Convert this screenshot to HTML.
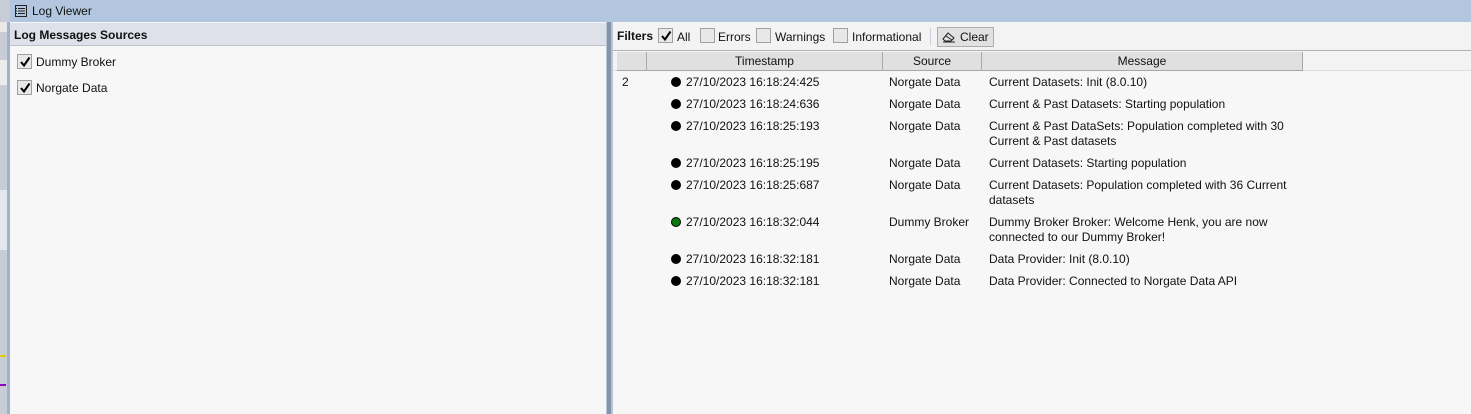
<!DOCTYPE html>
<html><head><meta charset="utf-8"><style>
*{margin:0;padding:0;box-sizing:border-box}
body{width:1471px;height:414px;overflow:hidden;background:#f7f7f7;font-family:"Liberation Sans",sans-serif;font-size:12px;color:#111;position:relative}
.a{position:absolute;white-space:nowrap}
.cb{position:absolute;width:15px;height:15px;border:1px solid #a0a0a0;background:#e8e8e8}
.cb svg{position:absolute;left:1px;top:1px}
.dot{position:absolute;width:10px;height:10px;border-radius:50%;background:#000}
.hd{position:absolute;top:52px;height:19px;border-right:1px solid #a8a8a8;border-bottom:1px solid #a8a8a8;background:#e0e0e0;text-align:center;line-height:18px}
</style></head><body>
<div class="a" style="left:0;top:0;width:10px;height:414px;background:#c8ccd4"></div>
<div class="a" style="left:0;top:22px;width:9px;height:10px;background:#e8e8e8"></div>
<div class="a" style="left:0;top:60px;width:9px;height:25px;background:#ececec"></div>
<div class="a" style="left:0;top:190px;width:9px;height:60px;background:#e4e8ee"></div>
<div class="a" style="left:0;top:355px;width:6px;height:2px;background:#e0d000"></div>
<div class="a" style="left:0;top:384px;width:6px;height:2px;background:#9000c0"></div>
<div class="a" style="left:7px;top:22px;width:3px;height:392px;background:#9fb2cc"></div>
<div class="a" style="left:10px;top:0;width:1461px;height:22px;background:#b3c6df"></div>
<svg class="a" style="left:15px;top:5px" width="12" height="12"><rect x="0.5" y="0.5" width="11" height="11" fill="none" stroke="#222"/><line x1="3" y1="3.5" x2="10" y2="3.5" stroke="#222"/><line x1="3" y1="6" x2="10" y2="6" stroke="#222"/><line x1="3" y1="8.5" x2="10" y2="8.5" stroke="#222"/><line x1="1" y1="3.5" x2="2" y2="3.5" stroke="#222"/><line x1="1" y1="6" x2="2" y2="6" stroke="#222"/><line x1="1" y1="8.5" x2="2" y2="8.5" stroke="#222"/></svg>
<div class="a" style="left:32px;top:4px;font-size:12px">Log Viewer</div>
<div class="a" style="left:10px;top:22px;width:596px;height:392px;background:#f7f7f7"></div>
<div class="a" style="left:10px;top:23px;width:596px;height:23px;background:#dfe1ea;border-bottom:1px solid #c0c0c8"></div>
<div class="a" style="left:14px;top:28px;font-weight:bold">Log Messages Sources</div>
<div class="cb" style="left:17px;top:54px"><svg width="12" height="12"><path d="M2 6 L5 9.5 L10.5 1.5" stroke="#000" stroke-width="2" fill="none"/></svg></div>
<div class="a" style="left:36px;top:55px">Dummy Broker</div>
<div class="cb" style="left:17px;top:80px"><svg width="12" height="12"><path d="M2 6 L5 9.5 L10.5 1.5" stroke="#000" stroke-width="2" fill="none"/></svg></div>
<div class="a" style="left:36px;top:81px">Norgate Data</div>
<div class="a" style="left:606px;top:22px;width:7px;height:392px;background:#b8c4d4"></div>
<div class="a" style="left:607px;top:22px;width:4px;height:392px;background:#8494aa"></div>
<div class="a" style="left:613px;top:22px;width:858px;height:29px;background:#f3f3f3;border-bottom:1px solid #b0b0b0"></div>
<div class="a" style="left:617px;top:29px;font-weight:bold">Filters</div>
<div class="cb" style="left:658px;top:28px"><svg width="12" height="12"><path d="M2 6 L5 9.5 L10.5 1.5" stroke="#000" stroke-width="2" fill="none"/></svg></div>
<div class="a" style="left:677px;top:30px">All</div>
<div class="cb" style="left:700px;top:28px"></div>
<div class="a" style="left:718px;top:30px">Errors</div>
<div class="cb" style="left:756px;top:28px"></div>
<div class="a" style="left:775px;top:30px">Warnings</div>
<div class="cb" style="left:833px;top:28px"></div>
<div class="a" style="left:852px;top:30px">Informational</div>
<div class="a" style="left:930px;top:28px;width:1px;height:17px;background:#c8d0dc"></div>
<div class="a" style="left:937px;top:27px;width:57px;height:20px;border:1px solid #adadad;background:#e1e1e1"></div>
<svg class="a" style="left:942px;top:31px" width="14" height="12"><path d="M1 8 L6 2 L12 7 L9 10 L3 10 Z M4 5 L10 9" stroke="#222" fill="none"/><line x1="1" y1="11" x2="13" y2="11" stroke="#222"/></svg>
<div class="a" style="left:960px;top:30px">Clear</div>
<div class="a" style="left:613px;top:52px;width:858px;height:19px;background:#f3f3f3;border-bottom:1px solid #e0e0e0"></div>
<div class="hd" style="left:617px;width:30px"></div>
<div class="hd" style="left:647px;width:236px">Timestamp</div>
<div class="hd" style="left:883px;width:99px">Source</div>
<div class="hd" style="left:982px;width:321px">Message</div>
<div class="a" style="left:622px;top:75px">2</div>
<div class="dot" style="left:671px;top:77px"></div><div class="a" style="left:686px;top:75px">27/10/2023 16:18:24:425</div><div class="a" style="left:889px;top:75px">Norgate Data</div><div class="a" style="left:989px;top:75px">Current Datasets: Init (8.0.10)</div>
<div class="dot" style="left:671px;top:99px"></div><div class="a" style="left:686px;top:97px">27/10/2023 16:18:24:636</div><div class="a" style="left:889px;top:97px">Norgate Data</div><div class="a" style="left:989px;top:97px">Current &amp; Past Datasets: Starting population</div>
<div class="dot" style="left:671px;top:121px"></div><div class="a" style="left:686px;top:119px">27/10/2023 16:18:25:193</div><div class="a" style="left:889px;top:119px">Norgate Data</div><div class="a" style="left:989px;top:119px;line-height:15px">Current &amp; Past DataSets: Population completed with 30<br>Current &amp; Past datasets</div>
<div class="dot" style="left:671px;top:158px"></div><div class="a" style="left:686px;top:156px">27/10/2023 16:18:25:195</div><div class="a" style="left:889px;top:156px">Norgate Data</div><div class="a" style="left:989px;top:156px">Current Datasets: Starting population</div>
<div class="dot" style="left:671px;top:180px"></div><div class="a" style="left:686px;top:178px">27/10/2023 16:18:25:687</div><div class="a" style="left:889px;top:178px">Norgate Data</div><div class="a" style="left:989px;top:178px;line-height:15px">Current Datasets: Population completed with 36 Current<br>datasets</div>
<div class="dot" style="left:671px;top:217px;background:#0a7a0a;border:1.5px solid #000"></div><div class="a" style="left:686px;top:215px">27/10/2023 16:18:32:044</div><div class="a" style="left:889px;top:215px">Dummy Broker</div><div class="a" style="left:989px;top:215px;line-height:15px">Dummy Broker Broker: Welcome Henk, you are now<br>connected to our Dummy Broker!</div>
<div class="dot" style="left:671px;top:254px"></div><div class="a" style="left:686px;top:252px">27/10/2023 16:18:32:181</div><div class="a" style="left:889px;top:252px">Norgate Data</div><div class="a" style="left:989px;top:252px">Data Provider: Init (8.0.10)</div>
<div class="dot" style="left:671px;top:276px"></div><div class="a" style="left:686px;top:274px">27/10/2023 16:18:32:181</div><div class="a" style="left:889px;top:274px">Norgate Data</div><div class="a" style="left:989px;top:274px">Data Provider: Connected to Norgate Data API</div>
</body></html>
